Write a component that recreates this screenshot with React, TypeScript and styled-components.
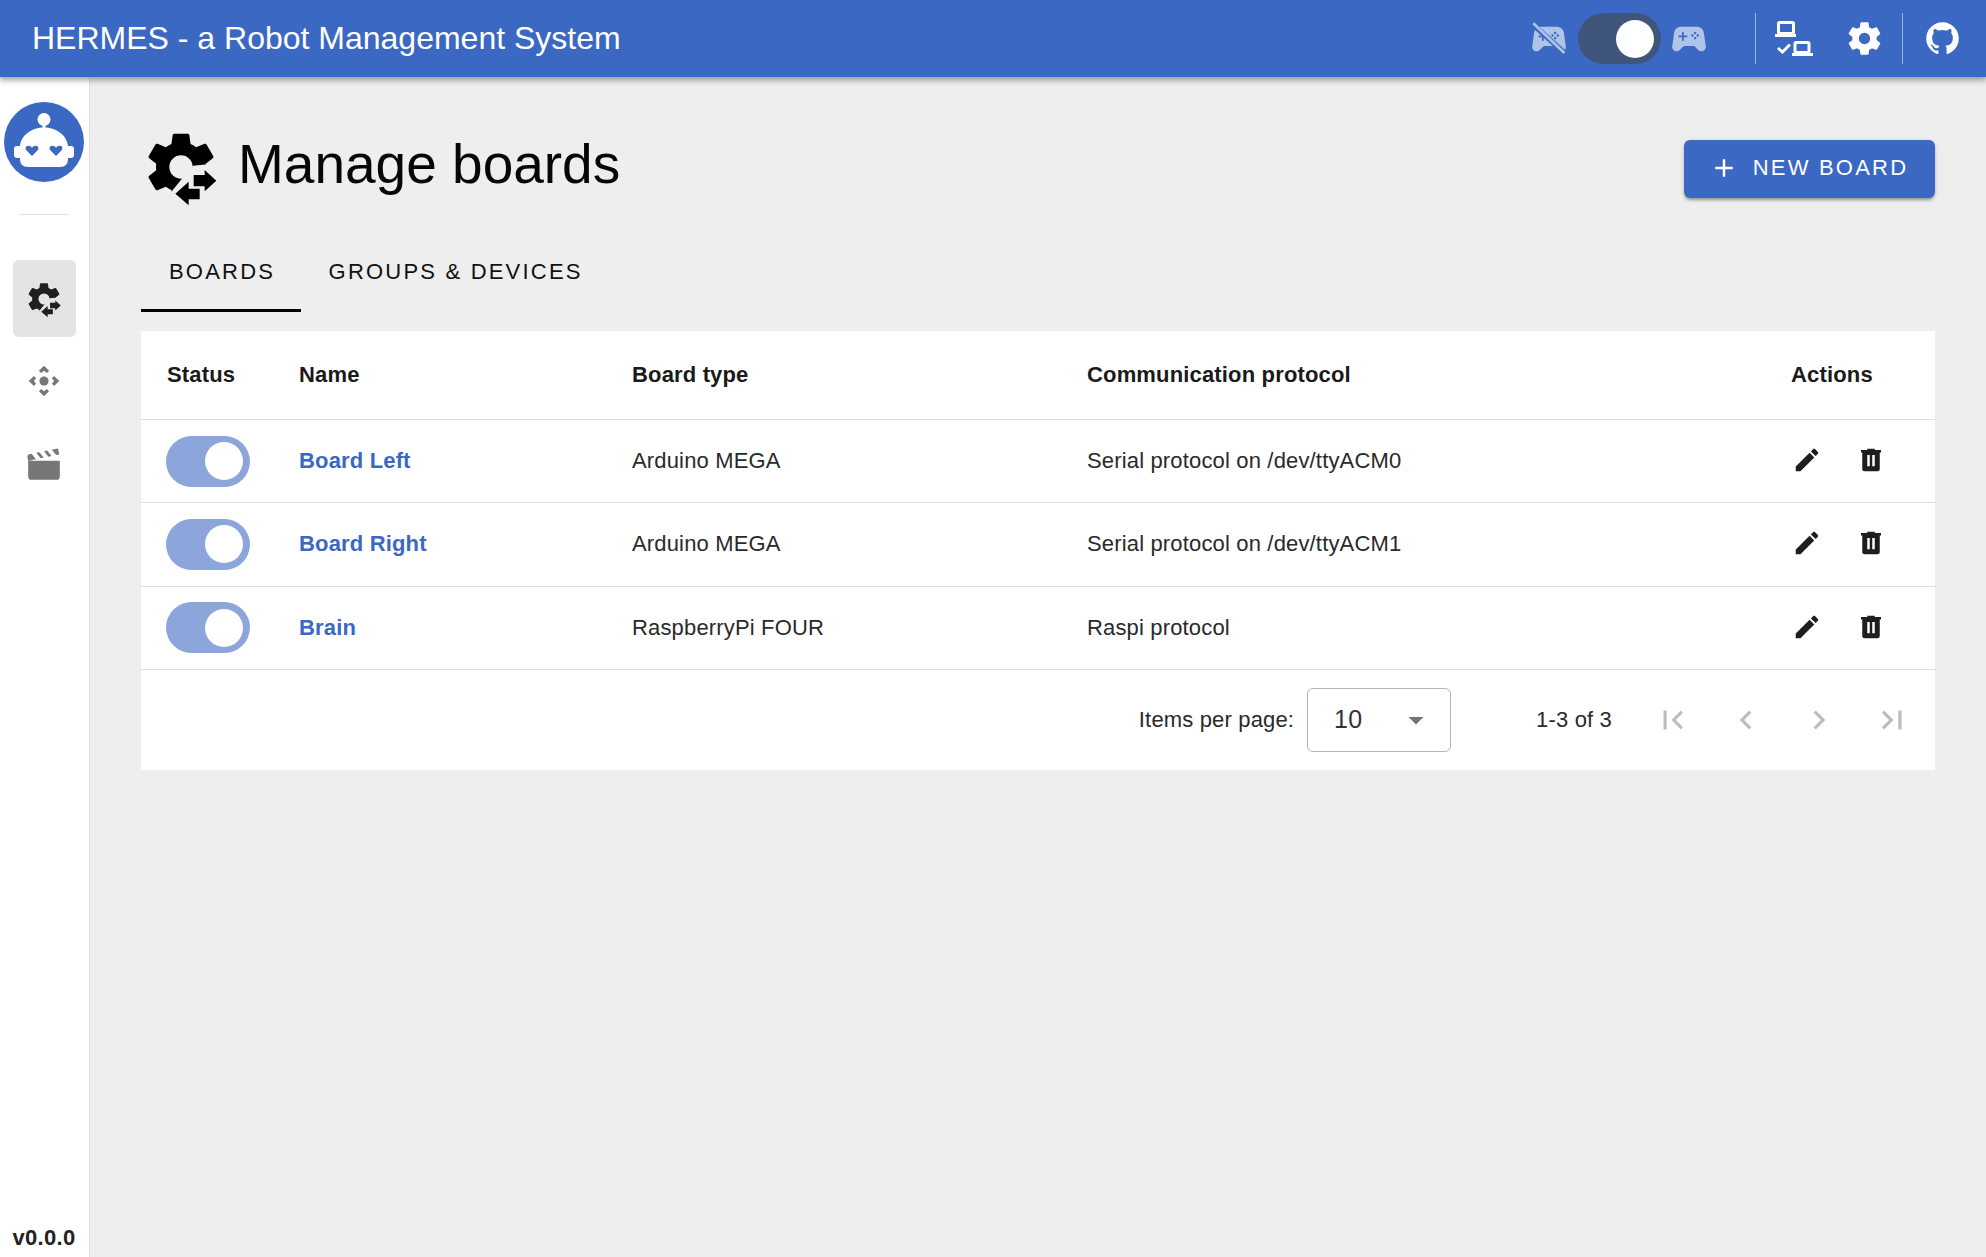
import React from 'react';
import styled, { createGlobalStyle } from 'styled-components';
import { MdAdd, MdArrowDropDown, MdChevronLeft, MdChevronRight, MdFirstPage, MdLastPage } from 'react-icons/md';

const Global = createGlobalStyle`
  html, body { margin: 0; padding: 0; height: 100%; background: #eeeeee; }
  * { box-sizing: border-box; }
  body { font-family: "Liberation Sans", Arial, sans-serif; color: #1e1e1e; overflow: hidden; }
`;

const Page = styled.div`display: flex; flex-direction: column; height: 100vh;`;
const TopBar = styled.header`
  height: 77px; flex: none; background: #3b68c2; color: #fff; display: flex; align-items: center;
  padding: 0 5px 0 32px; box-shadow: 0 2px 6px 1px rgba(0,0,0,.38); position: relative; z-index: 2;
`;
const AppTitle = styled.h1`margin: 0; font-size: 32px; font-weight: 400; flex: 1; letter-spacing: 0;`;
const ModeGroup = styled.div`display: flex; align-items: center; gap: 6px; margin-right: 45px; color: #b0c3e8;`;
const BarToggle = styled.div`
  width: 83px; height: 51px; border-radius: 26px; background: #40557c; display: flex; align-items: center;
  justify-content: flex-end; padding-right: 7px; margin-left: 2px; margin-right: 1px;
`;
const Thumb = styled.span`width: 38px; height: 38px; border-radius: 50%; background: #fff; display: block;`;
const BarDivider = styled.div`width: 1px; height: 51px; background: rgba(255,255,255,.5);`;
const BarIcon = styled.div<{ $w: number; $pr?: number }>`
  width: ${p => p.$w}px; padding-right: ${p => p.$pr ?? 0}px; display: flex; justify-content: center; align-items: center;
`;

const Body = styled.div`flex: 1; display: flex; min-height: 0;`;
const Sidebar = styled.aside`
  width: 90px; flex: none; background: #fff; border-right: 1px solid #e0e0e0; display: flex; flex-direction: column;
  align-items: center; padding: 25px 1px 0 0;
`;
const SideDivider = styled.div`width: 50px; height: 1px; background: #e2e2e2; margin: 32px 0 45px;`;
const SideItem = styled.div<{ $active?: boolean }>`
  width: 63px; height: 77px; border-radius: 6px; display: flex; align-items: center; justify-content: center; margin-bottom: 5.5px;
  background: ${p => (p.$active ? '#e4e4e4' : 'transparent')}; color: ${p => (p.$active ? '#1f1f1f' : '#777')};
`;
const Version = styled.div`margin-top: auto; font-size: 22px; letter-spacing: .3px; font-weight: 700; padding-bottom: 6px; color: #222;`;

const Main = styled.main`flex: 1; padding: 50px 51px 0 51px; min-width: 0;`;
const TitleRow = styled.div`display: flex; align-items: flex-start;`;
const TitleIcon = styled.div`color: #000; display: flex;`;
const PageTitle = styled.h2`margin: 0 0 0 17px; font-size: 55px; line-height: 74px; font-weight: 400; flex: 1; color: #060606;`;
const NewButton = styled.button`
  margin-top: 13px; width: 251px; height: 58px; border: 0; border-radius: 6px; background: #3b68c2; color: #fff;
  display: flex; align-items: center; justify-content: center; gap: 14px; font: 400 22px "Liberation Sans", Arial, sans-serif;
  letter-spacing: 2.2px; box-shadow: 0 3px 3px -1px rgba(0,0,0,.3), 0 1px 5px rgba(0,0,0,.15); padding: 0 2px 2px 0;
`;
const TabStrip = styled.div`display: flex; margin-top: 33px; height: 72px;`;
const Tab = styled.div<{ $active?: boolean }>`
  padding: 0 25.5px 5px 28px; display: flex; align-items: center; font-size: 22px; letter-spacing: 2.2px; color: #111;
  border-bottom: 3px solid ${p => (p.$active ? '#000' : 'transparent')};
`;

const Card = styled.section`margin-top: 19px; background: #fff; width: 1794px;`;
const Row = styled.div<{ $head?: boolean }>`
  display: grid; grid-template-columns: 132px 333px 455px 704px 144px; padding-left: 26px; align-items: center;
  height: ${p => (p.$head ? '89px' : '83.3px')}; border-bottom: 1px solid #e0e0e0; font-size: 22px; letter-spacing: .16px;
  font-weight: ${p => (p.$head ? 700 : 400)}; color: ${p => (p.$head ? '#1a1a1a' : '#2a2a2a')};
`;
const BoardName = styled.span`color: #3b68c2; font-weight: 700;`;
const Switch = styled.div`
  width: 84px; height: 51px; border-radius: 26px; background: #8ca6dc; display: flex; align-items: center; margin-left: -1px;
  justify-content: flex-end; padding-right: 7px;
`;
const Actions = styled.div`display: flex; margin: -2px 0 0 -16px;`;
const ActionButton = styled.div`width: 64px; display: flex; justify-content: center; color: #1e1e1e;`;

const Footer = styled.div`
  height: 100px; display: flex; align-items: center; justify-content: flex-end; font-size: 22px; letter-spacing: .16px;
  padding: 0 7px 0 0; color: #2a2a2a;
`;
const SelectBox = styled.div`
  width: 144px; height: 64px; margin-left: 13px; border: 1px solid #b5b5b5; border-radius: 6px; display: flex; align-items: center;
  justify-content: space-between; padding: 0 16px 0 26px; font-size: 25px; color: #333;
`;
const RangeText = styled.span`margin: 0 24px 0 85px;`;
const PagerButton = styled.div`width: 73px; display: flex; justify-content: center; color: #bdbdbd;`;

const cog = 'M12,15.5A3.5,3.5 0 0,1 8.5,12A3.5,3.5 0 0,1 12,8.5A3.5,3.5 0 0,1 15.5,12A3.5,3.5 0 0,1 12,15.5M19.43,12.97C19.47,12.65 19.5,12.33 19.5,12C19.5,11.67 19.47,11.34 19.43,11L21.54,9.37C21.73,9.22 21.78,8.95 21.66,8.73L19.66,5.27C19.54,5.05 19.27,4.96 19.05,5.05L16.56,6.05C16.04,5.66 15.5,5.32 14.87,5.07L14.5,2.42C14.46,2.18 14.25,2 14,2H10C9.75,2 9.54,2.18 9.5,2.42L9.13,5.07C8.5,5.32 7.96,5.66 7.44,6.05L4.95,5.05C4.73,4.96 4.46,5.05 4.34,5.27L2.34,8.73C2.21,8.95 2.27,9.22 2.46,9.37L4.57,11C4.53,11.34 4.5,11.67 4.5,12C4.5,12.33 4.53,12.65 4.57,12.97L2.46,14.63C2.27,14.78 2.21,15.05 2.34,15.27L4.34,18.73C4.46,18.95 4.73,19.03 4.95,18.95L7.44,17.94C7.96,18.34 8.5,18.68 9.13,18.93L9.5,21.58C9.54,21.82 9.75,22 10,22H14C14.25,22 14.46,21.82 14.5,21.58L14.87,18.93C15.5,18.67 16.04,18.34 16.56,17.94L19.05,18.95C19.27,19.03 19.54,18.95 19.66,18.73L21.66,15.27C21.78,15.05 21.73,14.78 21.54,14.63L19.43,12.97Z';

const Svg = ({ size, d, vb = '0 0 24 24' }: { size: number; d: string; vb?: string }) => (
  <svg width={size} height={size} viewBox={vb} fill="currentColor"><path d={d} fillRule="evenodd" /></svg>
);

const CogTransfer = ({ size, id }: { size: number; id: string }) => (
  <svg width={size} height={size} viewBox="0 0 24 24" fill="currentColor">
    <mask id={id}>
      <rect width="24" height="24" fill="#fff" />
      <polygon points="8.5,24 9,19.6 12.5,15.2 15,12.5 15.6,11.6 24,10.8 24,24" fill="#000" />
    </mask>
    <path d={cog} mask={`url(#${id})`} fillRule="evenodd" />
    <polygon points="15.8,14.4 19.1,14.4 19.1,12.9 22.6,16.1 19.1,19.3 19.1,17.8 15.8,17.8" />
    <polygon points="17.6,18.5 14.3,18.5 14.3,16.4 10.3,20 14.3,23.5 14.3,21.7 17.6,21.7" />
  </svg>
);

const gamepad = 'M21.58 16.09l-1.09-7.66C20.21 6.46 18.52 5 16.53 5H7.47C5.48 5 3.79 6.46 3.51 8.43l-1.09 7.66C2.2 17.63 3.39 19 4.94 19c.68 0 1.32-.27 1.8-.75L9 16h6l2.25 2.25c.48.48 1.13.75 1.8.75 1.56 0 2.75-1.37 2.53-2.91zM11 11H9v2H8v-2H6v-1h2V8h1v2h2v1zM15.5 9.2a.7.7 0 1 0 0-1.4.7.7 0 0 0 0 1.4zM15.5 12.2a.7.7 0 1 0 0-1.4.7.7 0 0 0 0 1.4zM14 10.7a.7.7 0 1 0 0-1.4.7.7 0 0 0 0 1.4zM17 10.7a.7.7 0 1 0 0-1.4.7.7 0 0 0 0 1.4z';

const GamepadOn = () => <Svg size={42} d={gamepad} />;
const GamepadOff = () => (
  <svg width={42} height={42} viewBox="0 0 24 24" fill="currentColor">
    <mask id="padOff">
      <rect width="24" height="24" fill="#fff" />
      <line x1="2" y1="3" x2="22" y2="21" stroke="#000" strokeWidth="3" />
    </mask>
    <path d={gamepad} fillRule="evenodd" mask="url(#padOff)" />
    <line x1="3" y1="3" x2="20.8" y2="20" stroke="currentColor" strokeWidth="1.5" />
  </svg>
);

const LaptopCheck = () => (
  <svg width={38} height={36} viewBox="0 0 38 36" fill="#fff">
    <rect x="3.5" y="1.5" width="15" height="11" rx="1" fill="none" stroke="#fff" strokeWidth="3" />
    <rect x="0" y="13" width="21" height="3" />
    <rect x="20" y="21.5" width="14" height="10" rx="1" fill="none" stroke="#fff" strokeWidth="3" />
    <rect x="17" y="32" width="21" height="3" />
    <path d="M3 27l4.5 4L15 23.5" fill="none" stroke="#fff" strokeWidth="3" />
  </svg>
);

const github = 'M12,2A10,10 0 0,0 2,12C2,16.42 4.87,20.17 8.84,21.5C9.34,21.58 9.5,21.27 9.5,21C9.5,20.77 9.5,20.14 9.5,19.31C6.73,19.91 6.14,17.97 6.14,17.97C5.68,16.81 5.03,16.5 5.03,16.5C4.12,15.88 5.1,15.9 5.1,15.9C6.1,15.97 6.63,16.93 6.63,16.93C7.5,18.45 8.97,18 9.54,17.76C9.63,17.11 9.89,16.67 10.17,16.42C7.95,16.17 5.62,15.31 5.62,11.5C5.62,10.39 6,9.5 6.65,8.79C6.55,8.54 6.2,7.5 6.75,6.15C6.75,6.15 7.59,5.88 9.5,7.17C10.29,6.95 11.15,6.84 12,6.84C12.85,6.84 13.71,6.95 14.5,7.17C16.41,5.88 17.25,6.15 17.25,6.15C17.8,7.5 17.45,8.54 17.35,8.79C18,9.5 18.38,10.39 18.38,11.5C18.38,15.32 16.04,16.16 13.81,16.41C14.17,16.72 14.5,17.33 14.5,18.26C14.5,19.6 14.5,20.68 14.5,21C14.5,21.27 14.66,21.59 15.17,21.5C19.14,20.16 22,16.42 22,12A10,10 0 0,0 12,2Z';
const pencil = 'M20.71,7.04C21.1,6.65 21.1,6 20.71,5.63L18.37,3.29C18,2.9 17.35,2.9 16.96,3.29L15.12,5.12L18.87,8.87M3,17.25V21H6.75L17.81,9.93L14.06,6.18L3,17.25Z';
const trash = 'M9,3V4H4V6H5V19A2,2 0 0,0 7,21H17A2,2 0 0,0 19,19V6H20V4H15V3H9M9,8H11V17H9V8M13,8H15V17H13V8Z';
const clapper = 'M20.84 2.18L16.91 2.96L19.65 6.39L21.62 6L20.84 2.18M13.97 3.54L12 3.93L14.75 7.37L16.71 7L13.97 3.54M9.07 4.5L7.1 4.91L9.85 8.35L11.81 7.96L9.07 4.5M4.16 5.5L3.18 5.69A2 2 0 0 0 1.61 8.04L2 10L6.9 9.03L4.16 5.5M2 10V20C2 21.11 2.9 22 4 22H20C21.11 22 22 21.11 22 20V10H2Z';

const MoveIcon = () => (
  <svg width={38} height={38} viewBox="0 0 24 24" fill="currentColor">
    <circle cx="12" cy="12" r="2.9" />
    <path d="M12 2.4L15.2 5.6 13.8 7 12 5.6 10.2 7 8.8 5.6Z" />
    <path d="M12 21.6L15.2 18.4 13.8 17 12 18.4 10.2 17 8.8 18.4Z" />
    <path d="M2.4 12L5.6 8.8 7 10.2 5.6 12 7 13.8 5.6 15.2Z" />
    <path d="M21.6 12L18.4 8.8 17 10.2 18.4 12 17 13.8 18.4 15.2Z" />
  </svg>
);

const heart = (x: number) => `M${x} 54L${x - 5.7} 48.2C${x - 7.5} 46 ${x - 6} 43.7 ${x - 3.5} 43.7C${x - 2} 43.7 ${x - 0.8} 44.5 ${x} 45.8C${x + 0.8} 44.5 ${x + 2} 43.7 ${x + 3.5} 43.7C${x + 6} 43.7 ${x + 7.5} 46 ${x + 5.7} 48.2Z`;

const RobotLogo = () => (
  <svg width={80} height={80} viewBox="0 0 80 80">
    <circle cx="40" cy="40" r="40" fill="#3b68c2" />
    <circle cx="40" cy="17.5" r="6.5" fill="#fff" />
    <rect x="38.5" y="20" width="3" height="8" fill="#fff" />
    <path d="M24 65Q16 65 16 57V56H13Q10 56 10 53V47Q10 44 13 44H16C17 33 28 25.5 40 25.5C52 25.5 63 33 64 44H67Q70 44 70 47V53Q70 56 67 56H64V57Q64 65 56 65Z" fill="#fff" />
    <path d={heart(28)} fill="#3b68c2" />
    <path d={heart(52)} fill="#3b68c2" />
  </svg>
);

const boards = [
  { name: 'Board Left', type: 'Arduino MEGA', protocol: 'Serial protocol on /dev/ttyACM0' },
  { name: 'Board Right', type: 'Arduino MEGA', protocol: 'Serial protocol on /dev/ttyACM1' },
  { name: 'Brain', type: 'RaspberryPi FOUR', protocol: 'Raspi protocol' },
];

export default function App() {
  return (
    <Page>
      <Global />
      <TopBar>
        <AppTitle>HERMES - a Robot Management System</AppTitle>
        <ModeGroup>
          <GamepadOff />
          <BarToggle><Thumb /></BarToggle>
          <GamepadOn />
        </ModeGroup>
        <BarDivider />
        <BarIcon $w={76}><LaptopCheck /></BarIcon>
        <BarIcon $w={70} $pr={5}><Svg size={39} d={cog} /></BarIcon>
        <BarDivider />
        <BarIcon $w={78}><Svg size={39} d={github} /></BarIcon>
      </TopBar>
      <Body>
        <Sidebar>
          <RobotLogo />
          <SideDivider />
          <SideItem $active><CogTransfer size={38} id="sideCog" /></SideItem>
          <SideItem><MoveIcon /></SideItem>
          <SideItem><Svg size={38} d={clapper} /></SideItem>
          <Version>v0.0.0</Version>
        </Sidebar>
        <Main>
          <TitleRow>
            <TitleIcon><CogTransfer size={80} id="titleCog" /></TitleIcon>
            <PageTitle>Manage boards</PageTitle>
            <NewButton><MdAdd size={30} />NEW BOARD</NewButton>
          </TitleRow>
          <TabStrip>
            <Tab $active>BOARDS</Tab>
            <Tab>GROUPS &amp; DEVICES</Tab>
          </TabStrip>
          <Card>
            <Row $head>
              <span>Status</span>
              <span>Name</span>
              <span>Board type</span>
              <span>Communication protocol</span>
              <span>Actions</span>
            </Row>
            {boards.map(b => (
              <Row key={b.name}>
                <Switch><Thumb /></Switch>
                <BoardName>{b.name}</BoardName>
                <span>{b.type}</span>
                <span>{b.protocol}</span>
                <Actions>
                  <ActionButton><Svg size={30} d={pencil} /></ActionButton>
                  <ActionButton><Svg size={30} d={trash} /></ActionButton>
                </Actions>
              </Row>
            ))}
            <Footer>
              <span>Items per page:</span>
              <SelectBox>10<MdArrowDropDown size={36} color="#757575" /></SelectBox>
              <RangeText>1-3 of 3</RangeText>
              <PagerButton><MdFirstPage size={38} /></PagerButton>
              <PagerButton><MdChevronLeft size={38} /></PagerButton>
              <PagerButton><MdChevronRight size={38} /></PagerButton>
              <PagerButton><MdLastPage size={38} /></PagerButton>
            </Footer>
          </Card>
        </Main>
      </Body>
    </Page>
  );
}
